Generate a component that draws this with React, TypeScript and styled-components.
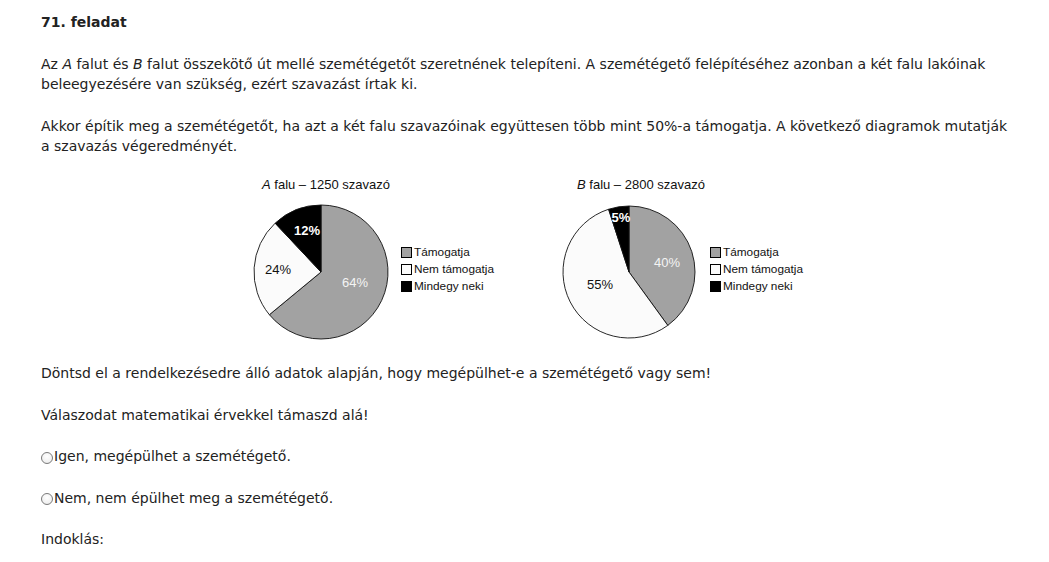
import React from "react";
import styled, { createGlobalStyle } from "styled-components";

const Global = createGlobalStyle`
  html, body { margin: 0; padding: 0; background: #ffffff; }
  body { font-family: "DejaVu Sans", Verdana, sans-serif; }
`;

const Page = styled.div`
  padding: 12px 0 0 41px;
  width: 978px;
  color: #222222;
  font-size: 14px;
  line-height: 20px;
`;

const Heading = styled.h3`
  margin: 0 0 22px;
  font-size: 14px;
  line-height: 20px;
  font-weight: bold;
`;

const Para = styled.p`
  margin: 0 0 21.5px;
`;

const Charts = styled.div`
  display: grid;
  grid-template-columns: 308px auto;
  margin: 1px 0 21px 210px;
`;

const Chart = styled.div`
  display: flex;
  flex-direction: column;
  font-family: "Liberation Sans", Arial, sans-serif;
  color: #111111;
`;

const ChartTitle = styled.div<{ $indent: number }>`
  font-size: 13px;
  line-height: 16px;
  padding-left: ${(p) => p.$indent}px;
  margin-bottom: 9px;
`;

const ChartBody = styled.div<{ $gap: number }>`
  display: flex;
  align-items: center;
  gap: ${(p) => p.$gap}px;
`;

const Legend = styled.div`
  display: flex;
  flex-direction: column;
  margin-bottom: 5px;
`;

const LegendRow = styled.div`
  display: flex;
  align-items: center;
  gap: 2px;
  font-size: 11.8px;
  line-height: 17px;
`;

const Swatch = styled.span<{ $fill: string }>`
  width: 9px;
  height: 9px;
  border: 1px solid #000000;
  background: ${(p) => p.$fill};
`;

const Option = styled.label`
  display: flex;
  align-items: center;
  gap: 1px;
  margin: 0 0 21.5px;
`;

const Radio = styled.span`
  width: 10px;
  height: 10px;
  margin-top: 3px;
  border: 1px solid #7a7a7a;
  border-radius: 50%;
  background: radial-gradient(circle at 50% 35%, #ffffff 0%, #f0f0f0 70%, #dcdcdc 100%);
`;

const GRAY = "#a2a2a2";
const WHITE = "#fbfbfb";
const BLACK = "#000000";

type Slice = { value: number; fill: string };
type Label = { text: string; x: number; y: number; color: string; bold?: boolean };

function point(cx: number, cy: number, r: number, frac: number) {
  const a = frac * Math.PI * 2;
  return [cx + r * Math.sin(a), cy - r * Math.cos(a)];
}

function Pie({ slices, labels, r }: { slices: Slice[]; labels: Label[]; r: number }) {
  const cx = 70;
  const cy = 70;
  let acc = 0;
  return (
    <svg width="140" height="140" viewBox="0 0 140 140">
      {slices.map((s, i) => {
        const [x1, y1] = point(cx, cy, r, acc);
        acc += s.value;
        const [x2, y2] = point(cx, cy, r, acc);
        const large = s.value > 0.5 ? 1 : 0;
        return (
          <path
            key={i}
            d={`M${cx},${cy} L${x1.toFixed(2)},${y1.toFixed(2)} A${r},${r} 0 ${large} 1 ${x2.toFixed(2)},${y2.toFixed(2)} Z`}
            fill={s.fill}
            stroke="#111111"
            strokeWidth="0.9"
          />
        );
      })}
      {labels.map((l, i) => (
        <text
          key={i}
          x={l.x}
          y={l.y}
          fill={l.color}
          fontSize="13"
          fontWeight={l.bold ? "bold" : "normal"}
          fontFamily='"Liberation Sans", Arial, sans-serif'
          textAnchor="middle"
          dominantBaseline="central"
        >
          {l.text}
        </text>
      ))}
    </svg>
  );
}

function LegendBox() {
  return (
    <Legend>
      <LegendRow>
        <Swatch $fill={GRAY} />
        Támogatja
      </LegendRow>
      <LegendRow>
        <Swatch $fill={WHITE} />
        Nem támogatja
      </LegendRow>
      <LegendRow>
        <Swatch $fill={BLACK} />
        Mindegy neki
      </LegendRow>
    </Legend>
  );
}

export default function App() {
  return (
    <>
      <Global />
      <Page>
        <Heading>71. feladat</Heading>
        <Para>
          Az <i>A</i> falut és <i>B</i> falut összekötő út mellé szemétégetőt szeretnének telepíteni. A
          szemétégető felépítéséhez azonban a két falu lakóinak beleegyezésére van szükség, ezért
          szavazást írtak ki.
        </Para>
        <Para>
          Akkor építik meg a szemétégetőt, ha azt a két falu szavazóinak együttesen több mint 50%-a
          támogatja. A következő diagramok mutatják a szavazás végeredményét.
        </Para>
        <Charts>
          <Chart>
            <ChartTitle $indent={11}>
              <i>A</i> falu – 1250 szavazó
            </ChartTitle>
            <ChartBody $gap={10}>
              <Pie
                r={67}
                slices={[
                  { value: 0.64, fill: GRAY },
                  { value: 0.24, fill: WHITE },
                  { value: 0.12, fill: BLACK },
                ]}
                labels={[
                  { text: "12%", x: 56, y: 28, color: "#ffffff", bold: true },
                  { text: "24%", x: 27, y: 67, color: "#111111" },
                  { text: "64%", x: 104, y: 80, color: "#f4f4f4" },
                ]}
              />
              <LegendBox />
            </ChartBody>
          </Chart>
          <Chart>
            <ChartTitle $indent={18}>
              <i>B</i> falu – 2800 szavazó
            </ChartTitle>
            <ChartBody $gap={11}>
              <Pie
                r={66}
                slices={[
                  { value: 0.4, fill: GRAY },
                  { value: 0.55, fill: WHITE },
                  { value: 0.05, fill: BLACK },
                ]}
                labels={[
                  { text: "5%", x: 62, y: 15, color: "#ffffff", bold: true },
                  { text: "40%", x: 108, y: 60, color: "#f4f4f4" },
                  { text: "55%", x: 41, y: 82, color: "#111111" },
                ]}
              />
              <LegendBox />
            </ChartBody>
          </Chart>
        </Charts>
        <Para>Döntsd el a rendelkezésedre álló adatok alapján, hogy megépülhet-e a szemétégető vagy sem!</Para>
        <Para>Válaszodat matematikai érvekkel támaszd alá!</Para>
        <Option>
          <Radio />
          Igen, megépülhet a szemétégető.
        </Option>
        <Option>
          <Radio />
          Nem, nem épülhet meg a szemétégető.
        </Option>
        <Para>Indoklás:</Para>
      </Page>
    </>
  );
}
